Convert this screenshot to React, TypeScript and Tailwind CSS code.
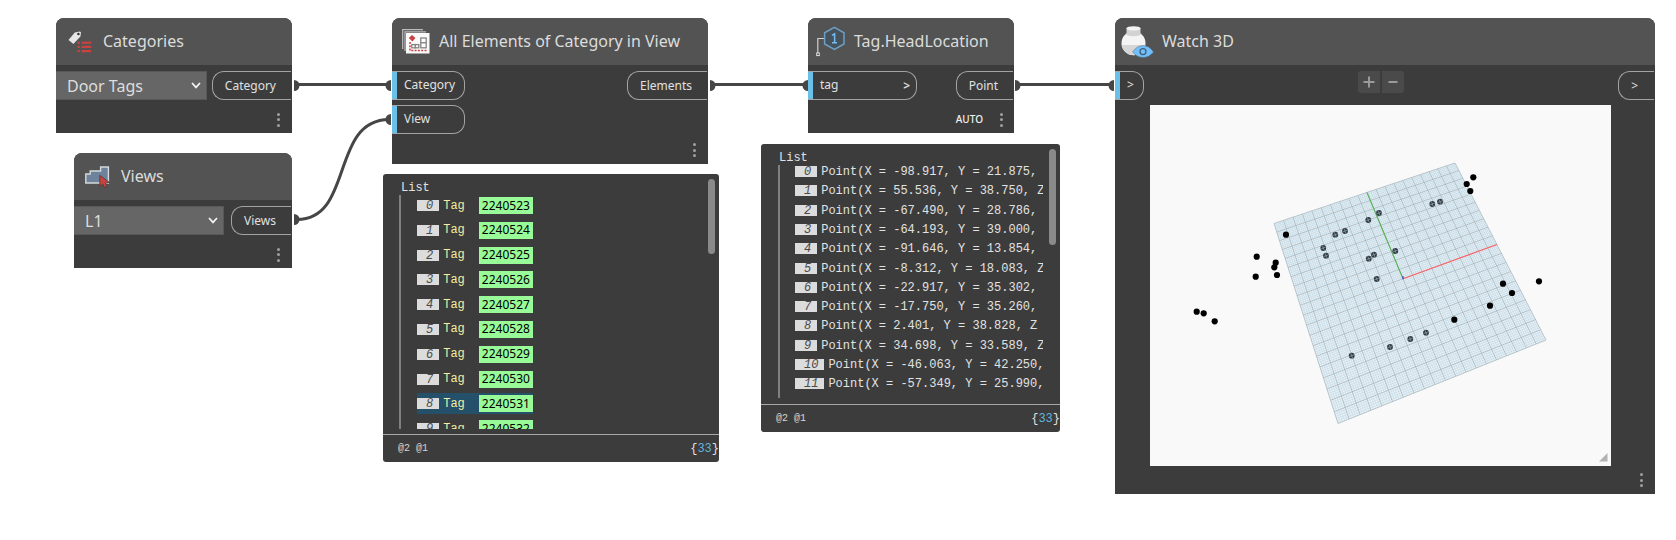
import type { ReactNode } from "react";

const mono = "font-['Liberation_Mono',monospace]";

/* ---------- icons ---------- */

function CategoriesIcon() {
  return (
    <svg width="24" height="22" viewBox="0 0 24 22" aria-hidden="true">
      <path d="M0.5 9 L6.8 1.4 L12 0.4 L13 1.6 L12.4 5.6 L5.4 13 Z" fill="#e6e6e6" />
      <circle cx="10.4" cy="3" r="1.3" fill="#333" />
      <g fill="#c9423f">
        <rect x="9.5" y="10.6" width="2.4" height="2.2" />
        <rect x="13.6" y="10.6" width="9.6" height="2.2" />
        <rect x="9.5" y="14.8" width="2.4" height="2.2" />
        <rect x="13.6" y="14.8" width="9.6" height="2.2" />
        <rect x="9.5" y="19" width="2.4" height="2.2" />
        <rect x="13.6" y="19" width="9.6" height="2.2" />
      </g>
    </svg>
  );
}

function ViewsIcon() {
  return (
    <svg width="25" height="22" viewBox="0 0 25 22" aria-hidden="true">
      <path d="M0.8 17 V8 H5.2 V5 H15.6 V1 H23.4 V17 Z" fill="#6d829b" stroke="#d5d9dc" strokeWidth="1.4" />
      <path d="M14.8 9.3 V20.6 L17.6 18 L19.6 21.6 L22 20.4 L20.4 17 L24.4 16.4 Z" fill="#c9423f" stroke="#4c3c3c" strokeWidth="0.8" />
    </svg>
  );
}

function ElementsIcon() {
  return (
    <svg width="28" height="25" viewBox="0 0 28 25" aria-hidden="true">
      <path d="M0.7 20 V0.7 H21 M3 22 V2.8 H24" fill="none" stroke="#bdbdbd" strokeWidth="1.2" />
      <rect x="4" y="4" width="23.5" height="20.5" fill="#fafafa" />
      <path d="M6.8 9 L10 6 L13.4 9 L10.4 12.4 Z" fill="#c9423f" />
      <path d="M8 13 V21.6 H25.5" fill="none" stroke="#c9423f" strokeWidth="1.5" strokeDasharray="2 1.3" />
      <g fill="#fff" stroke="#858585" strokeWidth="1.3">
        <rect x="18.8" y="9" width="5.4" height="4.8" />
        <rect x="18.8" y="13.8" width="5.4" height="5" />
        <rect x="9.8" y="15.6" width="3.6" height="3.2" />
        <rect x="13.4" y="15.6" width="3.4" height="3.2" />
      </g>
    </svg>
  );
}

function HeadLocationIcon() {
  return (
    <svg width="29" height="31" viewBox="0 0 29 31" aria-hidden="true">
      <path d="M8 12.5 H1.8 V27" fill="none" stroke="#d0d0d0" strokeWidth="1.2" />
      <rect x="0.7" y="27" width="2.6" height="2.6" fill="#444" stroke="#e4e4e4" strokeWidth="1" />
      <path d="M18.4 1.4 L28 6.8 V18 L18.4 23.4 L8.6 18 V6.8 Z" fill="#48525b" stroke="#6c9fc6" strokeWidth="1.5" />
      <path d="M16 9.4 L18.6 7.8 V16.8 M16 16.8 H21" fill="none" stroke="#72bdf5" strokeWidth="1.5" />
    </svg>
  );
}

function WatchIcon() {
  return (
    <svg width="33" height="32" viewBox="0 0 33 32" aria-hidden="true">
      <circle cx="12.5" cy="17.2" r="12" fill="#f4f4f4" />
      <path d="M0.6 19 A12 12 0 0 0 12.5 29.2 A12 12 0 0 0 24.4 19 Z" fill="#d6d6d6" />
      <path d="M5.5 2 V9 Q12.5 11.5 19.5 9 V2 Z" fill="#d2d2d2" />
      <ellipse cx="12.5" cy="2.4" rx="7" ry="2.2" fill="#f4f4f4" />
      <path d="M11.5 26 Q16 19.6 22 19.6 Q28 19.6 32.6 26 Q28 31.6 22 31.6 Q16 31.6 11.5 26 Z" fill="#72bffb" stroke="#4a5a66" strokeWidth="0.4" />
      <circle cx="22" cy="25.6" r="3" fill="none" stroke="#41617b" strokeWidth="1.3" />
    </svg>
  );
}

/* ---------- node parts ---------- */

function Node({ title, icon, place, header = "pl-3 gap-[11px]", children }: {
  title: string; icon: ReactNode; place: string; header?: string; children: ReactNode;
}) {
  return (
    <section className={`absolute rounded-t-lg bg-[#3c3c3c] ${place}`}>
      <header className={`flex h-[47px] items-center rounded-t-lg bg-[#535353] ${header}`}>
        {icon}
        <h2 className="pb-0.5 text-base font-normal whitespace-nowrap text-[#dcdcdc]">{title}</h2>
      </header>
      {children}
    </section>
  );
}

function InPort({ label, size, chevron }: { label: string; size: string; chevron?: boolean }) {
  return (
    <button className={`flex items-center justify-between rounded-r-xl border border-l-0 border-[#a3a3a3] pr-1 text-xs text-[#e0e0e0] ${size}`}>
      <span className="h-full w-[5px] bg-[#6ac0e7]" />
      <span className="flex-1 pb-0.5 pl-[7px] text-left">{label}</span>
      {chevron && <span className="pr-[2px] font-semibold">&gt;</span>}
    </button>
  );
}

function OutPort({ label, size = "pr-[15px] pl-3" }: { label: string; size?: string }) {
  return (
    <button className={`mr-px flex h-[29px] items-center rounded-l-xl border border-r-0 border-[#a3a3a3] text-xs text-[#e0e0e0] ${size}`}>
      {label}
    </button>
  );
}

function Menu() {
  return (
    <button aria-label="Node options" className="flex h-3.5 w-[3px] flex-col justify-between">
      <span className="size-[3px] rounded-full bg-[#a0a0a0]" />
      <span className="size-[3px] rounded-full bg-[#a0a0a0]" />
      <span className="size-[3px] rounded-full bg-[#a0a0a0]" />
    </button>
  );
}

function Picker({ name, value, width }: { name: string; value: string; width: string }) {
  return (
    <div className={`relative h-[29px] ${width}`}>
      <select aria-label={name} defaultValue={value} className="h-full w-full appearance-none border border-l-0 border-[#585858] bg-[#666666] pl-[11px] text-base text-[#dedede] outline-none">
        <option>{value}</option>
      </select>
      <svg className="pointer-events-none absolute top-[11px] right-1.5" width="10" height="8" viewBox="0 0 10 8" aria-hidden="true">
        <path d="M1 1 L5 5.4 L9 1" fill="none" stroke="#f5f5f5" strokeWidth="1.7" />
      </svg>
    </div>
  );
}

/* ---------- output previews ---------- */

function Preview({ place, thumb, tree, children }: { place: string; thumb: string; tree: string; children: ReactNode }) {
  return (
    <section className={`absolute flex flex-col rounded-[3px] bg-[#3c3c3c] text-xs text-[#e2e2e2] ${mono} ${place}`}>
      <div className="relative flex-1 pt-2 pr-[17px]">
        <p className="pl-[18px] leading-[13px]">List</p>
        <div className={`overflow-hidden border-l-2 border-[#808080] ${tree}`}>{children}</div>
        <div className={`absolute top-[5px] right-1 w-[7px] rounded-full bg-[#8a8a8a] ${thumb}`} />
      </div>
      <footer className="flex h-7 items-center justify-between border-t border-[#a8a8a8] pl-[15px]">
        <span className="text-[10px] text-[#d4d4d4]">@2 @1</span>
        <span>{"{"}<span className="text-[#5fb4de]">33</span>{"}"}</span>
      </footer>
    </section>
  );
}

function Index({ value }: { value: number }) {
  return <span className="h-[11px] bg-[#dcdcdc] pr-1.5 pl-[9px] text-xs leading-[13px] text-[#4a4a4a] italic">{value}</span>;
}

const tagIds = [2240523, 2240524, 2240525, 2240526, 2240527, 2240528, 2240529, 2240530, 2240531, 2240532];

const points = [
  "Point(X = -98.917, Y = 21.875,",
  "Point(X = 55.536, Y = 38.750, Z",
  "Point(X = -67.490, Y = 28.786,",
  "Point(X = -64.193, Y = 39.000,",
  "Point(X = -91.646, Y = 13.854,",
  "Point(X = -8.312, Y = 18.083, Z",
  "Point(X = -22.917, Y = 35.302,",
  "Point(X = -17.750, Y = 35.260,",
  "Point(X = 2.401, Y = 38.828, Z",
  "Point(X = 34.698, Y = 33.589, Z",
  "Point(X = -46.063, Y = 42.250,",
  "Point(X = -57.349, Y = 25.990,",
  "Point(X = -44.120, Y = 24.500,",
];

/* ---------- 3D viewport ---------- */

const corners = [[124, 118.5], [305, 58], [396, 235], [188, 318.5]];

// Projective map from the unit square to the ground plane's four corners.
function project(u: number, v: number): [number, number] {
  const [[x0, y0], [x1, y1], [x2, y2], [x3, y3]] = corners;
  const dx1 = x1 - x2, dx2 = x3 - x2, dx3 = x0 - x1 + x2 - x3;
  const dy1 = y1 - y2, dy2 = y3 - y2, dy3 = y0 - y1 + y2 - y3;
  const det = dx1 * dy2 - dx2 * dy1;
  const g = (dx3 * dy2 - dx2 * dy3) / det;
  const h = (dx1 * dy3 - dx3 * dy1) / det;
  const w = g * u + h * v + 1;
  return [
    ((x1 - x0 + g * x1) * u + (x3 - x0 + h * x3) * v + x0) / w,
    ((y1 - y0 + g * y1) * u + (y3 - y0 + h * y3) * v + y0) / w,
  ];
}

function gridPath(count: number, skip: number) {
  let d = "";
  for (let i = 0; i <= count; i++) {
    if (skip && i % skip === 0) continue;
    const t = i / count;
    const ends = [[project(t, 0), project(t, 1)], [project(0, t), project(1, t)]];
    for (const [a, b] of ends) d += `M${a[0].toFixed(2)} ${a[1].toFixed(2)}L${b[0].toFixed(2)} ${b[1].toFixed(2)}`;
  }
  return d;
}

const above = [
  [136, 129.7], [106.7, 151.7], [125.7, 157.7], [124.3, 162.3], [105.7, 171.7], [127, 170], [46.7, 206.7], [53.7, 208.3],
  [64.7, 216.3], [323.3, 72.3], [316.7, 79], [320.3, 86], [389, 176.3], [353, 178.7], [362, 188], [340, 200.7], [304.3, 214.7],
];
const below = [
  [229, 108], [218.3, 115], [185.3, 129.7], [195, 126], [173.3, 143], [176, 150.7], [218.7, 153.7], [224, 149.7],
  [245.3, 146], [226.7, 174], [201.7, 250.7], [240, 242], [282.3, 99], [290, 96.7], [260.3, 234], [276, 227.7],
];

function Scene() {
  const [ox, oy] = project(0.5, 0.5);
  const [rx, ry] = project(1, 0.5);
  const [gx, gy] = project(0.5, 0);
  return (
    <svg viewBox="0 0 461 361" className="block w-full" role="img" aria-label="3D preview of tag locations">
      <polygon points={corners.map((c) => c.join(",")).join(" ")} fill="#eaf2f6" />
      <path d={gridPath(100, 5)} stroke="#a5c8da" strokeOpacity="0.6" strokeWidth="0.55" />
      <path d={gridPath(20, 0)} stroke="#8b9ea8" strokeOpacity="0.8" strokeWidth="0.7" />
      <path d={`M${ox} ${oy}L${rx} ${ry}`} stroke="#fa6468" strokeWidth="1.2" />
      <path d={`M${ox} ${oy}L${gx} ${gy}`} stroke="#5db35f" strokeWidth="1.2" />
      <path d={`M${ox} ${oy + 0.5}V${oy - 2.5}`} stroke="#3340e0" strokeWidth="1.3" />
      {below.map(([x, y]) => (
        <g key={`${x}-${y}`}>
          <circle cx={x} cy={y} r="2.9" fill="#303a42" />
          <path d={`M${x - 2.5} ${y + 1}L${x + 2.5} ${y - 1}M${x - 1} ${y - 2.5}L${x + 1} ${y + 2.5}`} stroke="#a4b6c1" strokeWidth="0.6" />
        </g>
      ))}
      {above.map(([x, y]) => <circle key={`${x}-${y}`} cx={x} cy={y} r="3.1" fill="#000" />)}
      <path d="M449 356.5 H457.5 V348 Z" fill="#b3b3b3" />
    </svg>
  );
}

function Wires() {
  return (
    <svg className="absolute inset-0 h-full w-full" aria-hidden="true">
      <g fill="none" stroke="#464646" strokeWidth="3">
        <path d="M296 84.5 H390 M710 84.5 H806 M1016 84.5 H1113" />
        <path d="M297 219.5 C354 219.5 330 120 389 119.5" />
      </g>
      <g fill="#464646">
        <path d="M294 80 A5.5 5.5 0 0 1 294 91 Z" />
        <path d="M294 214 A5.5 5.5 0 0 1 294 225 Z" />
        <path d="M710 80 A5.5 5.5 0 0 1 710 91 Z" />
        <path d="M1015 80 A5.5 5.5 0 0 1 1015 91 Z" />
        <path d="M391 80 A5.5 5.5 0 0 0 391 91 Z" />
        <path d="M391 114 A5.5 5.5 0 0 0 391 125 Z" />
        <path d="M808 80 A5.5 5.5 0 0 0 808 91 Z" />
        <path d="M1114 80 A5.5 5.5 0 0 0 1114 91 Z" />
      </g>
    </svg>
  );
}

export default function App() {
  return (
    <main className="relative min-h-screen overflow-hidden bg-white font-['Noto_Sans',sans-serif]">
      <Wires />

      <Node title="Categories" icon={<CategoriesIcon />} place="top-[18px] left-14 w-[236px]">
        <div className="flex justify-between pt-1.5">
          <Picker name="Category" value="Door Tags" width="w-[151px]" />
          <OutPort label="Category" />
        </div>
        <div className="flex h-[33px] items-center justify-end pt-1.5 pr-3"><Menu /></div>
      </Node>

      <Node title="Views" icon={<ViewsIcon />} place="top-[153px] left-[74px] w-[218px]" header="pl-[11px] gap-[11px]">
        <div className="flex justify-between pt-1.5">
          <Picker name="View" value="L1" width="w-[150px]" />
          <OutPort label="Views" />
        </div>
        <div className="flex h-[33px] items-center justify-end pt-1.5 pr-3"><Menu /></div>
      </Node>

      <Node title="All Elements of Category in View" icon={<ElementsIcon />} place="top-[18px] left-[392px] w-[316px]" header="pl-2.5 gap-[9px]">
        <div className="flex items-start justify-between pt-1.5">
          <div className="flex flex-col gap-[5px]">
            <InPort label="Category" size="h-[29px] w-[73px]" />
            <InPort label="View" size="h-[29px] w-[73px]" />
          </div>
          <OutPort label="Elements" />
        </div>
        <div className="flex h-[30px] items-center justify-end pt-0.5 pr-3"><Menu /></div>
      </Node>

      <Preview place="top-[174px] left-[383px] h-[288px] w-[336px]" thumb="h-[75px]" tree="ml-4 h-[234px]">
        <ol className="grid h-[248px] grid-rows-10 pl-4">
          {tagIds.map((id, i) => (
            <li key={id} className={`flex h-[21px] w-fit items-center ${i === 8 ? "bg-[#24506a]" : ""}`}>
              <Index value={i} />
              <span className="pl-1 text-[#f3efa0]">Tag</span>
              <button className="ml-3.5 h-[17px] bg-[#98fb98] px-[3px] font-['Noto_Sans',sans-serif] text-xs leading-4 text-black">{id}</button>
            </li>
          ))}
        </ol>
      </Preview>

      <Node title="Tag.HeadLocation" icon={<HeadLocationIcon />} place="top-[18px] left-[808px] w-[206px]" header="pl-2 gap-[9px]">
        <div className="flex justify-between pt-1.5">
          <InPort label="tag" size="h-[29px] w-[109px]" chevron />
          <OutPort label="Point" />
        </div>
        <div className="flex h-[33px] items-center justify-end gap-[17px] pt-1.5 pr-[11px]">
          <span className="text-[10px] font-medium text-[#f0f0f0]">AUTO</span>
          <Menu />
        </div>
      </Node>

      <Preview place="top-36 left-[761px] h-[288px] w-[299px]" thumb="h-[96px]" tree="ml-[17px] h-[233px]">
        <ol className="grid h-[251px] grid-rows-13 pl-[15px]">
          {points.map((p, i) => (
            <li key={p} className="flex items-start pt-px leading-[13px] whitespace-nowrap">
              <Index value={i} />
              <span className="pl-1">{p}</span>
            </li>
          ))}
        </ol>
      </Preview>

      <Node title="Watch 3D" icon={<WatchIcon />} place="top-[18px] left-[1115px] w-[540px]" header="pl-1.5 gap-2">
        <div className="flex h-10 items-start justify-between pt-1.5">
          <InPort label=">" size="h-[29px] w-[29px]" />
          <div className="flex gap-0.5">
            <button aria-label="Zoom in" className="flex size-[22px] items-center justify-center rounded-l-[3px] bg-[#4a4a4a]">
              <svg width="12" height="12" viewBox="0 0 12 12" aria-hidden="true"><path d="M0.5 6 H11.5 M6 0.5 V11.5" stroke="#9a9a9a" strokeWidth="2" /></svg>
            </button>
            <button aria-label="Zoom out" className="flex size-[22px] items-center justify-center rounded-r-[3px] bg-[#4a4a4a]">
              <svg width="12" height="12" viewBox="0 0 12 12" aria-hidden="true"><path d="M1.5 6 H10.5" stroke="#9a9a9a" strokeWidth="2" /></svg>
            </button>
          </div>
          <OutPort label=">" size="pl-3 pr-4" />
        </div>
        <div className="mr-11 ml-[35px] bg-[#f9f9f9]"><Scene /></div>
        <div className="flex h-7 items-center justify-end pr-3"><Menu /></div>
      </Node>
    </main>
  );
}
